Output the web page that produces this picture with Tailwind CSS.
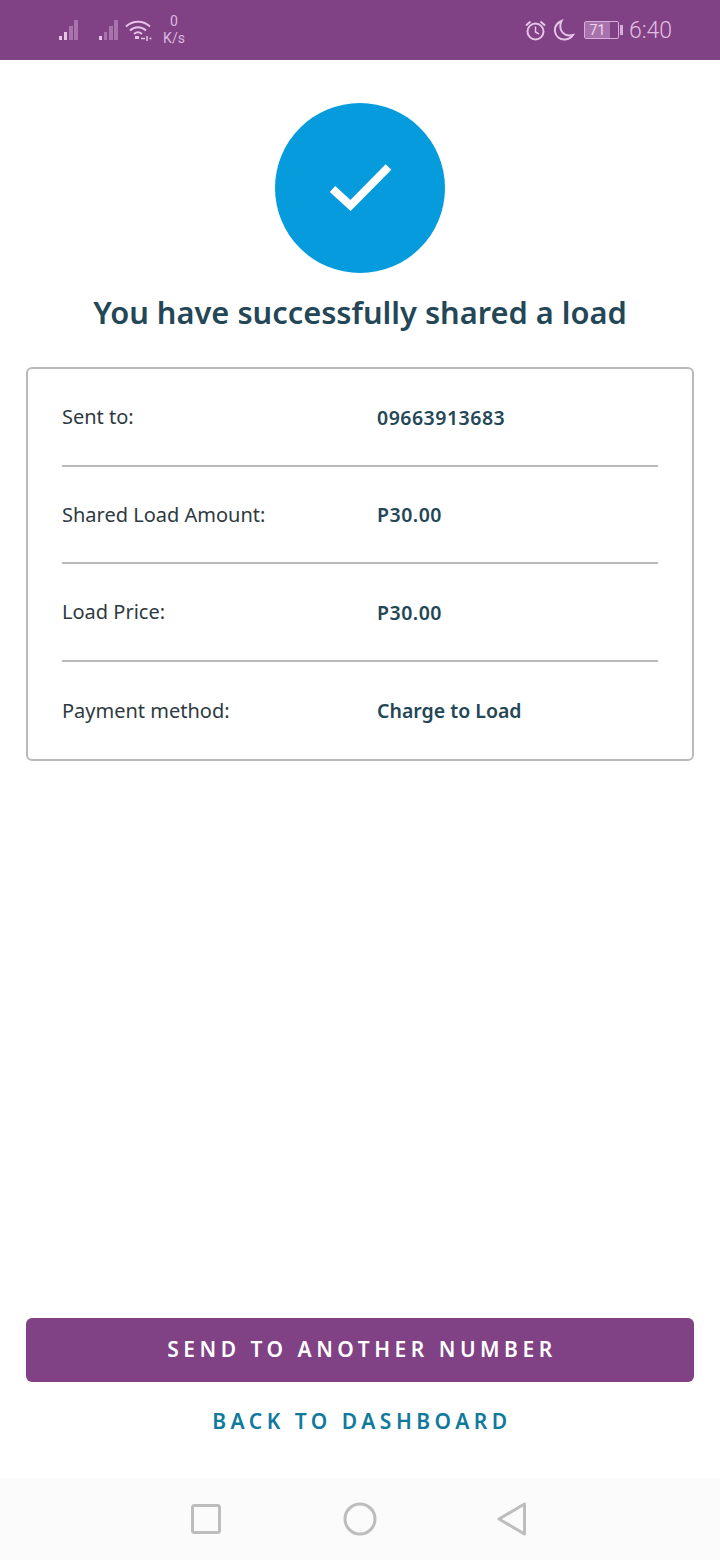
<!DOCTYPE html>
<html lang="en">

<head>
	<meta charset="UTF-8">
	<meta name="viewport" content="width=device-width, initial-scale=1.0">
	<title>Share a Load</title>
	<script src="https://cdn.jsdelivr.net/npm/@tailwindcss/browser@4"></script>
</head>

<body class="bg-white">
	<div class="w-[720px] h-[1560px] flex flex-col font-['Noto_Sans','Liberation_Sans',sans-serif] overflow-hidden">
		<!-- status bar -->
		<div class="h-[60px] bg-[#804185] flex items-center justify-between pl-[58px] pr-[48px] shrink-0">
			<div class="flex items-center">
				<svg class="w-[22px] h-[22px]" viewBox="0 0 22 22">
					<rect x="1" y="17" width="3" height="4" fill="#e5c3e8" />
					<rect x="6" y="13" width="3" height="8" fill="#e5c3e8" />
					<rect x="11" y="7" width="4" height="14" fill="#a873ac" />
					<rect x="16" y="1" width="4" height="20" fill="#a873ac" />
				</svg>
				<svg class="w-[22px] h-[22px] ml-[18px]" viewBox="0 0 22 22">
					<rect x="1" y="17" width="3" height="4" fill="#e5c3e8" />
					<rect x="6" y="13" width="3" height="8" fill="#a873ac" />
					<rect x="11" y="7" width="4" height="14" fill="#a873ac" />
					<rect x="16" y="1" width="4" height="20" fill="#a873ac" />
				</svg>
				<svg class="w-[27px] h-[24px] ml-[5px]" viewBox="0 0 27 24" fill="none" stroke="#e5c3e8" stroke-width="2">
					<path d="M1 8.500C7.500 2 18.500 2 25 8.500" />
					<path d="M5 12.500C9.500 8 16.500 8 21 12.500" />
					<path d="M9 16C11.500 13.800 14.500 13.800 17 16" />
					<rect x="10" y="18" width="4" height="3" fill="#e5c3e8" stroke="none" />
					<path d="M16 20.500h4M22 18v5M24.500 20.500h2" stroke-width="1.500" />
				</svg>
				<div class="ml-[10px] w-[24px] flex flex-col items-center font-['Roboto',sans-serif] text-[14px] leading-[17px] text-[#dcb9df]">
					<span>0</span>
					<span>K/s</span>
				</div>
			</div>
			<div class="flex items-center">
				<svg class="w-[23px] h-[23px]" viewBox="0 0 23 23" fill="none" stroke="#e5c3e8" stroke-width="2">
					<circle cx="11.500" cy="12.500" r="8" />
					<path d="M11.500 7.500v5.500l3.500 2" stroke-width="1.500" />
					<path d="M2 6.500L6.500 2.500M21 6.500L16.500 2.500" />
				</svg>
				<svg class="w-[23px] h-[23px] ml-[5px]" viewBox="0 0 23 23" fill="none" stroke="#e5c3e8" stroke-width="2">
					<path d="M9.500 2C5 4 2.500 8 3 12.500 3.500 17.500 8 21 13 20.500 16.500 20.200 19.500 18.500 21 16 15 17.500 10.500 15 9 11 8 8 8 5 9.500 2Z" />
				</svg>
				<div class="ml-[9px] flex items-center">
					<div class="w-[35px] h-[18px] border border-[#d6aeda] rounded-[2px] flex">
						<div class="w-[25px] h-full bg-[#a873ac] flex items-center justify-center font-['Roboto',sans-serif] text-[14px] text-[#ecd5ee] leading-none">71</div>
					</div>
					<div class="w-[3px] h-[10px] ml-[1px] bg-[#d6aeda]"></div>
				</div>
				<span class="ml-[6px] font-['Roboto',sans-serif] font-light text-[23px] leading-none text-[#e0bfe3]">6:40</span>
			</div>
		</div>

		<!-- success -->
		<div class="flex flex-col items-center pt-[43px]">
			<div class="w-[170px] h-[170px] rounded-full bg-[#059bdc] flex items-center justify-center">
				<svg class="w-[64px] h-[52px]" viewBox="0 0 64 52" fill="none" stroke="#fff" stroke-width="8">
					<path d="M4.500 27L22.500 43.500L60.500 5" />
				</svg>
			</div>
			<h1 class="mt-[19px] text-[30.800px] leading-[40px] font-semibold text-[#234756]">You have successfully shared a load</h1>
		</div>

		<!-- details card -->
		<div class="mx-[26px] mt-[35px] h-[394px] border-2 border-[#b9b9b9] rounded-[6px] px-[34px] flex flex-col">
			<div class="h-[98px] pt-[1px] flex items-center border-b-2 border-[#b9b9b9]">
				<span class="w-[315px] text-[20px] text-[#2e3a40]">Sent to:</span>
				<span class="text-[19.500px] tracking-[0.500px] font-semibold text-[#234756]">09663913683</span>
			</div>
			<div class="h-[98px] pt-[1px] flex items-center border-b-2 border-[#b9b9b9]">
				<span class="w-[315px] text-[20px] text-[#2e3a40]">Shared Load Amount:</span>
				<span class="text-[19.500px] tracking-[0.500px] font-semibold text-[#234756]">P30.00</span>
			</div>
			<div class="h-[98px] pt-[1px] flex items-center border-b-2 border-[#b9b9b9]">
				<span class="w-[315px] text-[20px] text-[#2e3a40]">Load Price:</span>
				<span class="text-[19.500px] tracking-[0.500px] font-semibold text-[#234756]">P30.00</span>
			</div>
			<div class="h-[98px] pt-[1px] flex items-center">
				<span class="w-[315px] text-[20px] text-[#2e3a40]">Payment method:</span>
				<span class="text-[19.500px] font-semibold text-[#234756]">Charge to Load</span>
			</div>
		</div>

		<!-- actions -->
		<div class="mt-auto px-[26px] flex flex-col">
			<button class="h-[64px] pl-[4px] rounded-[6px] bg-[#804185] text-white text-[21px] font-semibold tracking-[4.500px]">SEND TO ANOTHER NUMBER</button>
			<button class="mt-[24px] mb-[42px] h-[30px] pl-[4px] text-[#0f7a9c] text-[21px] font-semibold tracking-[4.500px]">BACK TO DASHBOARD</button>
		</div>

		<!-- nav bar -->
		<div class="h-[82px] bg-[#fbfbfb] flex items-center justify-center shrink-0 pb-[1px]">
			<svg class="w-[30px] h-[30px] -ml-[2px]" viewBox="0 0 30 30" fill="none" stroke="#bdbdbd" stroke-width="3">
				<rect x="1.500" y="1.500" width="27" height="27" rx="2" />
			</svg>
			<svg class="w-[34px] h-[34px] ml-[122px]" viewBox="0 0 34 34" fill="none" stroke="#bdbdbd" stroke-width="3">
				<circle cx="17" cy="17" r="15" />
			</svg>
			<svg class="w-[30px] h-[34px] ml-[120px]" viewBox="0 0 30 34" fill="none" stroke="#bdbdbd" stroke-width="3" stroke-linejoin="round">
				<path d="M27.500 2V32L2 17Z" />
			</svg>
		</div>
	</div>
</body>

</html>
